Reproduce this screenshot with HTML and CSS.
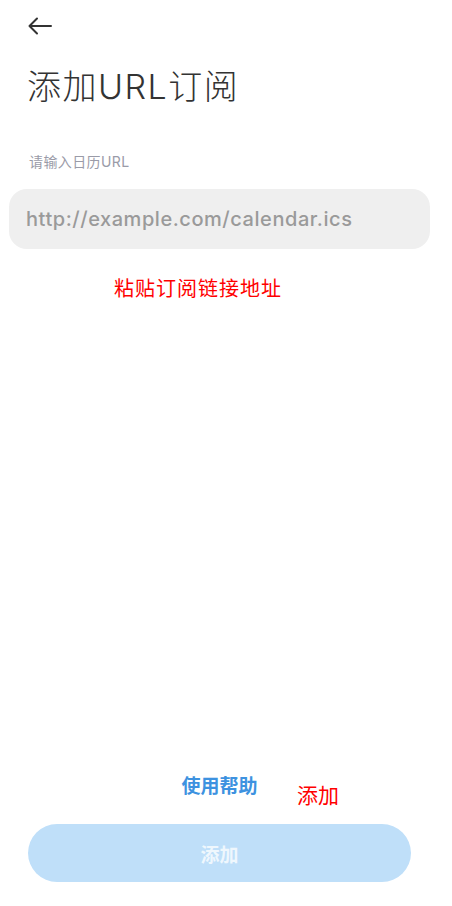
FILE: index.html
```html
<!DOCTYPE html>
<html lang="zh-CN">
<head>
<meta charset="utf-8">
<link rel="stylesheet" href="styles.css">
</head>
<body>
<div class="page">
  <header class="topbar">
    <svg class="back" width="24" height="18" viewBox="0 0 24 18" aria-label="返回">
      <path d="M1.5 9 H23 M9 1.5 L1.5 9 L9 16.5" fill="none" stroke="#333" stroke-width="2" stroke-linecap="round" stroke-linejoin="round"/>
    </svg>
  </header>
  <h1 class="title">添加URL订阅</h1>
  <div class="label">请输入日历URL</div>
  <div class="field">
    <input class="url-input" type="text" placeholder="http://example.com/calendar.ics">
  </div>
  <div class="spacer"></div>
  <div class="bottom">
    <a class="help">使用帮助</a>
    <button class="add-btn" type="button">添加</button>
  </div>
  <div class="note note-paste">粘贴订阅链接地址</div>
  <div class="note note-add">添加</div>
</div>
</body>
</html>
```
FILE: styles.css
```css
html, body {
  margin: 0;
  padding: 0;
  background: #ffffff;
}
body {
  font-family: "Noto Sans", "Noto Sans CJK SC", sans-serif;
}
.page {
  position: relative;
  width: 452px;
  height: 906px;
  display: flex;
  flex-direction: column;
  overflow: hidden;
}
.topbar {
  height: 36px;
  padding: 17px 0 0 28px;
  box-sizing: border-box;
}
.back {
  display: block;
}
.title {
  margin: 28px 0 0 27px;
  font-family: "Inter", "Noto Sans CJK SC", sans-serif;
  font-weight: 300;
  font-size: 34px;
  line-height: 46px;
  color: #333333;
  letter-spacing: 1.5px;
}
.label {
  margin: 43px 0 0 29px;
  font-family: "Inter", "Noto Sans CJK SC", sans-serif;
  font-size: 14px;
  line-height: 18px;
  color: #9a9ba8;
  letter-spacing: 0.4px;
}
.field {
  margin: 18px 22px 0 9px;
  height: 60px;
  background: #efefef;
  border-radius: 18px;
  display: flex;
  align-items: center;
  padding: 0 17px;
}
.url-input {
  flex: 1;
  border: none;
  background: transparent;
  outline: none;
  font-family: "Inter", sans-serif;
  font-weight: 500;
  font-size: 20px;
  letter-spacing: 0.55px;
  color: #333;
  padding: 0;
}
.url-input::placeholder {
  color: #9a9a9a;
  opacity: 1;
}
.spacer {
  flex: 1;
}
.bottom {
  display: flex;
  flex-direction: column;
  align-items: center;
  margin: 0 41px 24px 28px;
}
.help {
  font-family: "Noto Sans CJK SC", sans-serif;
  font-weight: 700;
  font-size: 19px;
  line-height: 24px;
  color: #3d92e0;
  margin-bottom: 27px;
}
.add-btn {
  width: 100%;
  height: 58px;
  border: none;
  border-radius: 29px;
  background: #bfdff9;
  font-family: "Noto Sans CJK SC", sans-serif;
  font-weight: 700;
  font-size: 19px;
  color: rgba(255, 255, 255, 0.75);
  padding: 0;
}
.note {
  position: absolute;
  font-family: "Noto Sans CJK SC", sans-serif;
  font-size: 20px;
  line-height: 24px;
  color: #ff0000;
}
.note-paste {
  left: 114px;
  top: 276px;
  letter-spacing: 1px;
}
.note-add {
  left: 297px;
  top: 782px;
  font-size: 21px;
}
```
